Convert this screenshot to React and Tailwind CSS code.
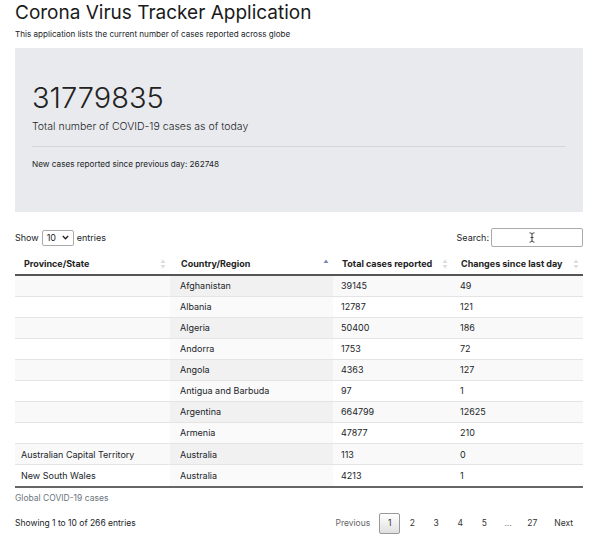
import React from "react";

const rows = [
  ["", "Afghanistan", "39145", "49"],
  ["", "Albania", "12787", "121"],
  ["", "Algeria", "50400", "186"],
  ["", "Andorra", "1753", "72"],
  ["", "Angola", "4363", "127"],
  ["", "Antigua and Barbuda", "97", "1"],
  ["", "Argentina", "664799", "12625"],
  ["", "Armenia", "47877", "210"],
  ["Australian Capital Territory", "Australia", "113", "0"],
  ["New South Wales", "Australia", "4213", "1"],
];

function SortIcon({ active }) {
  return (
    <svg width="6" height="10" viewBox="0 0 6 10" className="shrink-0">
      <path d="M3 0.5 L5.5 4 L0.5 4 Z" fill={active ? "#7b8bb5" : "#dcdcdc"} />
      {!active && <path d="M3 9.5 L5.5 6 L0.5 6 Z" fill="#dcdcdc" />}
    </svg>
  );
}

function HeaderCell({ label, width, active, pad }) {
  return (
    <th className={`${width} ${pad} h-[22px] pr-[4px] text-left font-bold text-[9px] text-[#222]`}>
      <div className="flex items-center justify-between">
        <span>{label}</span>
        <SortIcon active={active} />
      </div>
    </th>
  );
}

export default function App() {
  return (
    <div className="min-h-[537px] bg-white pl-[15px] pr-[17px] text-[#212529] font-['Inter','Liberation_Sans',sans-serif]">
      <h1 className="pt-[1px] text-[19px] leading-[24px] font-normal text-[#1a1a1a]">
        Corona Virus Tracker Application
      </h1>
      <p className="mt-[3px] text-[8.1px] leading-[12px]">
        This application lists the current number of cases reported across globe
      </p>

      <div className="mt-[8px] h-[164px] bg-[#e9eaed] px-[17px] pt-[33px]">
        <div className="text-[29px] leading-[34px] font-light text-[#222]">31779835</div>
        <div className="mt-[5px] text-[10.5px] leading-[14px] font-light">
          Total number of COVID-19 cases as of today
        </div>
        <div className="mt-[12px] border-t border-[#d4d5d8]"></div>
        <div className="mt-[11px] text-[8.2px] leading-[12px]">
          New cases reported since previous day: 262748
        </div>
      </div>

      <div className="mt-[16px] flex items-center justify-between h-[19px] text-[9px]">
        <div className="flex items-center gap-[3px]">
          <span>Show</span>
          <div className="flex items-center justify-between w-[32px] h-[16px] border border-[#aaa] rounded-[2px] px-[4px] bg-white">
            <span>10</span>
            <svg width="7" height="5" viewBox="0 0 7 5">
              <path d="M0.8 1 L3.5 3.8 L6.2 1" stroke="#222" strokeWidth="1.3" fill="none" />
            </svg>
          </div>
          <span>entries</span>
        </div>
        <div className="flex items-center gap-[2px]">
          <span>Search:</span>
          <div className="relative w-[92px] h-[19px] border border-[#aaa] rounded-[2px] bg-white">
            <svg className="absolute left-[37px] top-[3px]" width="6" height="11" viewBox="0 0 6 11">
              <path d="M0.5 0.8 Q3 0.8 3 2.5 L3 8.5 Q3 10.2 0.5 10.2 M5.5 0.8 Q3 0.8 3 2.5 M3 8.5 Q3 10.2 5.5 10.2 M1.5 5.5 L4.5 5.5" stroke="#333" strokeWidth="0.9" fill="none" />
            </svg>
          </div>
        </div>
      </div>

      <table className="mt-[6px] w-[568px] table-fixed border-collapse text-[9px]">
        <thead>
          <tr className="border-b-2 border-[#555]">
            <HeaderCell label="Province/State" width="w-[155px]" pad="pl-[9px]" />
            <HeaderCell label="Country/Region" width="w-[163px]" pad="pl-[11px]" active />
            <HeaderCell label="Total cases reported" width="w-[119px]" pad="pl-[9px]" />
            <HeaderCell label="Changes since last day" width="w-[131px]" pad="pl-[9px]" />
          </tr>
        </thead>
        <tbody>
          {rows.map((r, i) => (
            <tr
              key={i}
              className={`h-[21.1px] border-t border-[#e4e4e4] first:border-t-0 ${i % 2 === 0 ? "bg-[#f9f9f9]" : "bg-white"}`}
            >
              <td className="pl-[6px]">{r[0]}</td>
              <td className={`pl-[10px] ${i % 2 === 0 ? "bg-[#f1f1f1]" : "bg-[#fafafa]"}`}>{r[1]}</td>
              <td className="pl-[8px]">{r[2]}</td>
              <td className="pl-[8px]">{r[3]}</td>
            </tr>
          ))}
        </tbody>
      </table>
      <div className="border-t-2 border-[#666] w-[568px]"></div>

      <div className="mt-[4px] text-[8.5px] leading-[12px] text-[#6c757d]">Global COVID-19 cases</div>

      <div className="mt-[9px] flex items-center justify-between text-[8.5px]">
        <span>Showing 1 to 10 of 266 entries</span>
        <div className="flex items-center text-[#333]">
          <span className="px-[9px] text-[#666]">Previous</span>
          <span className="flex items-center justify-center w-[21px] h-[21px] border border-[#999] rounded-[2px] bg-gradient-to-b from-white to-[#e0e0e0]">1</span>
          <span className="w-[24px] text-center">2</span>
          <span className="w-[24px] text-center">3</span>
          <span className="w-[24px] text-center">4</span>
          <span className="w-[24px] text-center">5</span>
          <span className="w-[24px] text-center text-[#777]">…</span>
          <span className="w-[24px] text-center">27</span>
          <span className="pl-[10px] pr-[10px]">Next</span>
        </div>
      </div>
    </div>
  );
}
